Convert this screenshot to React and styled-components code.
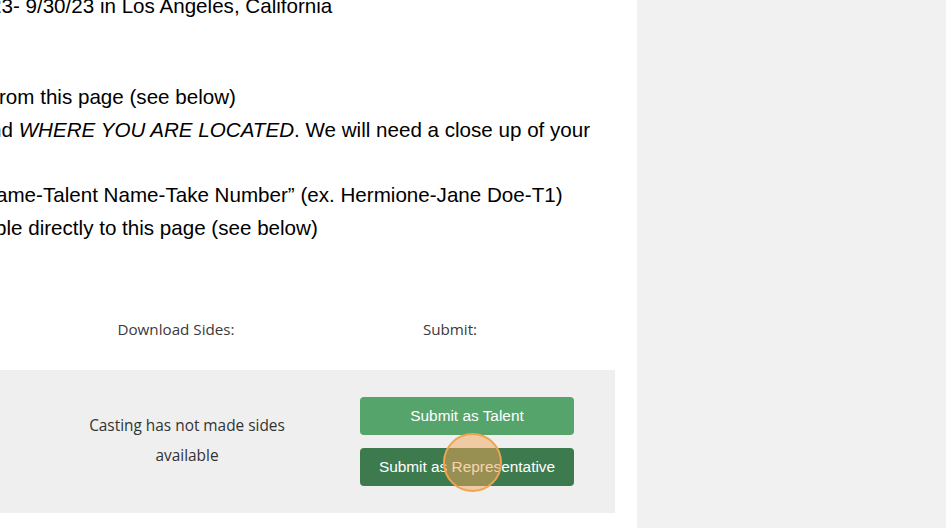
import React from "react";
import styled, { createGlobalStyle } from "styled-components";

const Global = createGlobalStyle`
  html, body { margin: 0; padding: 0; height: 100%; overflow: hidden; background: #fff; }
  #root { height: 100%; }
`;

const Page = styled.div`
  display: flex;
  width: 946px;
  height: 528px;
  overflow: hidden;
`;

const Main = styled.main`
  width: 637px;
  flex: none;
  background: #ffffff;
  overflow: hidden;
  display: flex;
  flex-direction: column;
`;

const Sidebar = styled.aside`
  flex: 1;
  background: #f1f1f1;
`;

const Copy = styled.div`
  font-family: "Liberation Sans", Arial, sans-serif;
  font-size: 20.6px;
  line-height: 32.75px;
  color: #000;
  margin-top: -10px;
`;

const Para = styled.p`
  margin: 0 0 ${(p) => p.$after || 0}px 0;
`;

const Line = styled.div`
  white-space: nowrap;
  min-height: 32.75px;
  margin-left: ${(p) => p.$shift || 0}px;
`;

const HeaderRow = styled.div`
  display: grid;
  grid-template-columns: 274px 274px;
  padding-left: 39px;
  margin-top: 74px;
  font-family: "Open Sans", sans-serif;
  font-size: 15.2px;
  line-height: 20px;
  color: #3a3a3a;
  text-align: center;
`;

const SidesBox = styled.section`
  margin-top: 31px;
  width: 615px;
  height: 143px;
  box-sizing: border-box;
  background: #efefef;
  display: grid;
  grid-template-columns: 360px 214px;
  align-items: center;
`;

const Note = styled.div`
  padding-left: 14px;
  text-align: center;
  font-family: "Open Sans", sans-serif;
  font-size: 15.4px;
  line-height: 30px;
  color: #333;
`;

const Buttons = styled.div`
  position: relative;
  display: flex;
  flex-direction: column;
  gap: 13px;
`;

const Button = styled.button`
  height: 38px;
  width: 214px;
  border: none;
  border-radius: 4px;
  background: ${(p) => (p.$dark ? "#3d7b4f" : "#55a46c")};
  color: #fff;
  font-family: "Liberation Sans", Arial, sans-serif;
  font-size: 15.4px;
  padding: 0;
  cursor: pointer;
`;

const Cursor = styled.span`
  position: absolute;
  left: 83px;
  top: 36px;
  width: 55px;
  height: 55px;
  border-radius: 50%;
  border: 2px solid #f0a34c;
  background: rgba(242, 165, 85, 0.5);
  pointer-events: none;
`;

export default function App() {
  return (
    <>
      <Global />
      <Page>
        <Main>
          <Copy>
            <Para $after={58}>
              <Line $shift={-10}>23- 9/30/23 in Los Angeles, California</Line>
            </Para>
            <Para>
              <Line $shift={-1}>rom this page (see below)</Line>
              <Line $shift={-10}>
                nd <i>WHERE YOU ARE LOCATED</i>. We will need a close up of your
              </Line>
              <Line />
              <Line $shift={-4}>ame-Talent Name-Take Number” (ex. Hermione-Jane Doe-T1)</Line>
              <Line $shift={-5}>ble directly to this page (see below)</Line>
            </Para>
          </Copy>
          <HeaderRow>
            <div>Download Sides:</div>
            <div>Submit:</div>
          </HeaderRow>
          <SidesBox>
            <Note>
              Casting has not made sides
              <br />
              available
            </Note>
            <Buttons>
              <Button>Submit as Talent</Button>
              <Button $dark>Submit as Representative</Button>
              <Cursor />
            </Buttons>
          </SidesBox>
        </Main>
        <Sidebar />
      </Page>
    </>
  );
}
